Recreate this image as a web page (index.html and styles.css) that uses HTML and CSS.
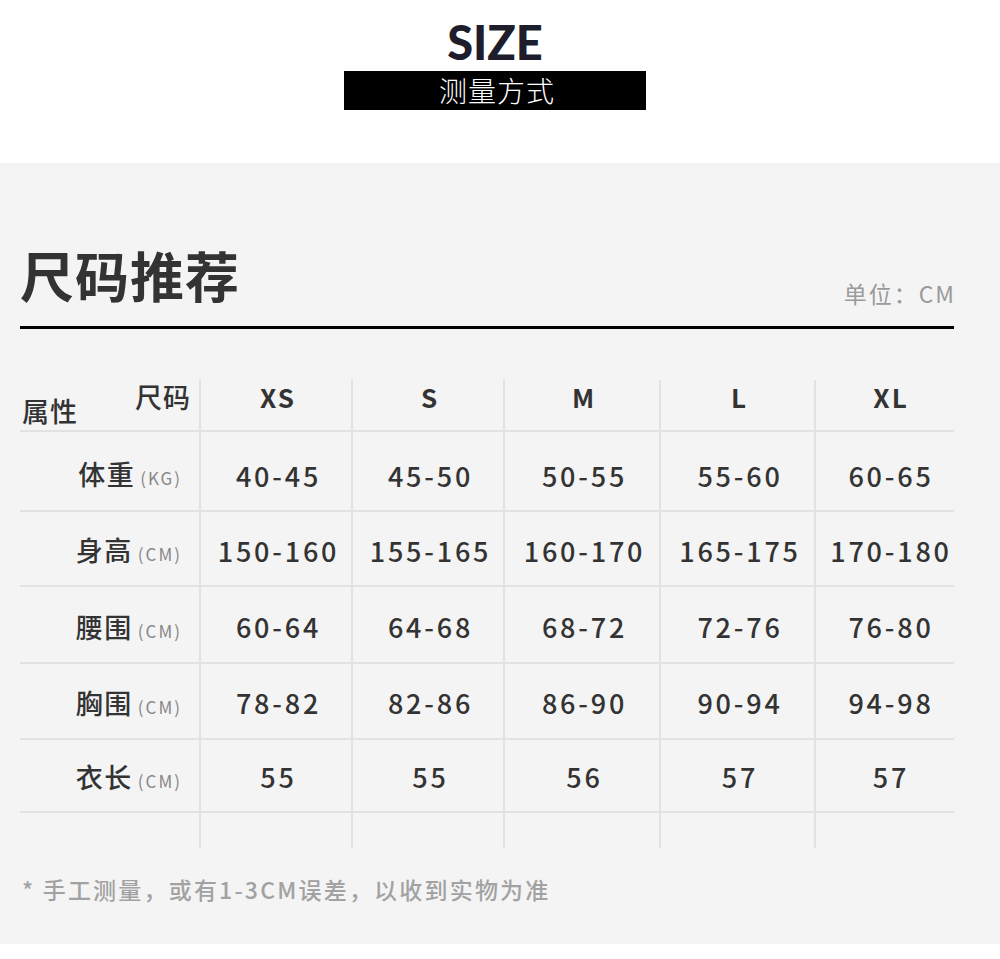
FILE: index.html
```html
<!DOCTYPE html>
<html lang="zh-CN">
<head>
<meta charset="utf-8">
<title>尺码推荐</title>
<link rel="stylesheet" href="styles.css">
</head>
<body>
<header class="top">
  <h1 class="size-title">SIZE</h1>
  <div class="size-bar">测量方式</div>
</header>
<section class="panel">
  <div class="panel-head">
    <h2 class="panel-title">尺码推荐</h2>
    <div class="unit">单位：CM</div>
  </div>
  <div class="table">
    <div class="cell corner"><span class="corner-tr">尺码</span><span class="corner-bl">属性</span></div>
    <div class="cell hd">XS</div>
    <div class="cell hd">S</div>
    <div class="cell hd">M</div>
    <div class="cell hd">L</div>
    <div class="cell hd last">XL</div>

    <div class="cell lbl r1">体重<small>(KG)</small></div>
    <div class="cell val r1">40-45</div>
    <div class="cell val r1">45-50</div>
    <div class="cell val r1">50-55</div>
    <div class="cell val r1">55-60</div>
    <div class="cell val r1 last">60-65</div>

    <div class="cell lbl r2">身高<small>(CM)</small></div>
    <div class="cell val r2">150-160</div>
    <div class="cell val r2">155-165</div>
    <div class="cell val r2">160-170</div>
    <div class="cell val r2">165-175</div>
    <div class="cell val r2 last">170-180</div>

    <div class="cell lbl r3">腰围<small>(CM)</small></div>
    <div class="cell val r3">60-64</div>
    <div class="cell val r3">64-68</div>
    <div class="cell val r3">68-72</div>
    <div class="cell val r3">72-76</div>
    <div class="cell val r3 last">76-80</div>

    <div class="cell lbl r4">胸围<small>(CM)</small></div>
    <div class="cell val r4">78-82</div>
    <div class="cell val r4">82-86</div>
    <div class="cell val r4">86-90</div>
    <div class="cell val r4">90-94</div>
    <div class="cell val r4 last">94-98</div>

    <div class="cell lbl r5">衣长<small>(CM)</small></div>
    <div class="cell val r5">55</div>
    <div class="cell val r5">55</div>
    <div class="cell val r5">56</div>
    <div class="cell val r5">57</div>
    <div class="cell val r5 last">57</div>

    <div class="cell empty"></div>
    <div class="cell empty"></div>
    <div class="cell empty"></div>
    <div class="cell empty"></div>
    <div class="cell empty"></div>
    <div class="cell empty last"></div>
  </div>
  <p class="note">* 手工测量，或有1-3CM误差，以收到实物为准</p>
</section>
</body>
</html>
```

FILE: styles.css
```css
* { box-sizing: border-box; }
html, body { margin: 0; padding: 0; background: #fff; }
body {
  font-family: "Noto Sans CJK SC", "Noto Sans", sans-serif;
  color: #333;
  width: 1000px;
}
.top {
  height: 163px;
  display: flex;
  flex-direction: column;
  align-items: center;
  padding-top: 17px;
  padding-right: 10px;
}
.size-title {
  margin: 0;
  font-family: Lato, "Noto Sans", sans-serif;
  font-weight: 900;
  font-size: 47px;
  line-height: 50px;
  letter-spacing: 0;
  color: #1e1d2b;
  height: 54px;
}
.size-bar {
  width: 302px;
  height: 39px;
  background: #000;
  color: #fff;
  font-size: 28px;
  font-weight: 300;
  line-height: 39px;
  text-align: center;
  letter-spacing: 1px;
  padding-left: 4px;
}
.panel {
  background: #f4f4f4;
  height: 781px;
  padding: 77px 46px 0 20px;
}
.panel-head {
  display: flex;
  justify-content: space-between;
  align-items: flex-end;
  border-bottom: 3px solid #000;
  padding-bottom: 16px;
}
.panel-title {
  margin: 0;
  font-size: 54px;
  font-weight: 700;
  line-height: 70px;
  color: #333;
  letter-spacing: 1px;
}
.unit {
  font-size: 23px;
  color: #9a9a9a;
  line-height: 30px;
  letter-spacing: 2px;
  padding-bottom: 2px;
  margin-right: -2px;
}
.table {
  margin-top: 51px;
  display: grid;
  grid-template-columns: 181px 152px 152px 156px 155px 138px;
  grid-template-rows: 52px 80px 75px 77px 76px 73px 35px;
}
.cell {
  border-right: 2px solid #e2e2e2;
  border-bottom: 2px solid #e2e2e2;
  display: flex;
  align-items: center;
  justify-content: center;
}
.cell.last { border-right: none; }
.cell.empty { border-bottom: none; }
.corner { position: relative; }
.corner-tr {
  position: absolute;
  right: 8px;
  top: 0;
  font-size: 27px;
  font-weight: 500;
  line-height: 34px;
  letter-spacing: 1px;
}
.corner-bl {
  position: absolute;
  left: 2px;
  top: 13px;
  font-size: 27px;
  font-weight: 500;
  line-height: 36px;
  letter-spacing: 1px;
}
.hd {
  font-size: 26px;
  font-weight: 600;
  letter-spacing: 2px;
  align-items: flex-start;
  padding-top: 0;
  padding-left: 4px;
  line-height: 34px;
}
.hd.last { padding-left: 12px; }
.lbl {
  justify-content: flex-end;
  padding-right: 17px;
  font-size: 27px;
  font-weight: 500;
  letter-spacing: 1.5px;
  align-items: baseline;
  padding-top: 22px;
}
.lbl small {
  font-size: 17px;
  font-weight: 400;
  color: #888;
  margin-left: 5px;
  letter-spacing: 2px;
}
.val {
  font-size: 27px;
  font-weight: 500;
  letter-spacing: 2.8px;
  padding-left: 5px;
}
.val.last { padding-left: 12px; }
.r1.val { padding-top: 8px; }
.r2.val { padding-top: 4px; }
.r3.val { padding-top: 4px; }
.r4.val { padding-top: 2px; }
.r5.val { padding-top: 2px; }
.r2.lbl { padding-top: 18px; }
.r3.lbl { padding-top: 20px; }
.r4.lbl { padding-top: 19px; }
.r5.lbl { padding-top: 17px; }
.note {
  margin: 24px 0 0 2px;
  font-size: 23px;
  font-weight: 500;
  color: #a2a2a2;
  letter-spacing: 2.2px;
}
```
